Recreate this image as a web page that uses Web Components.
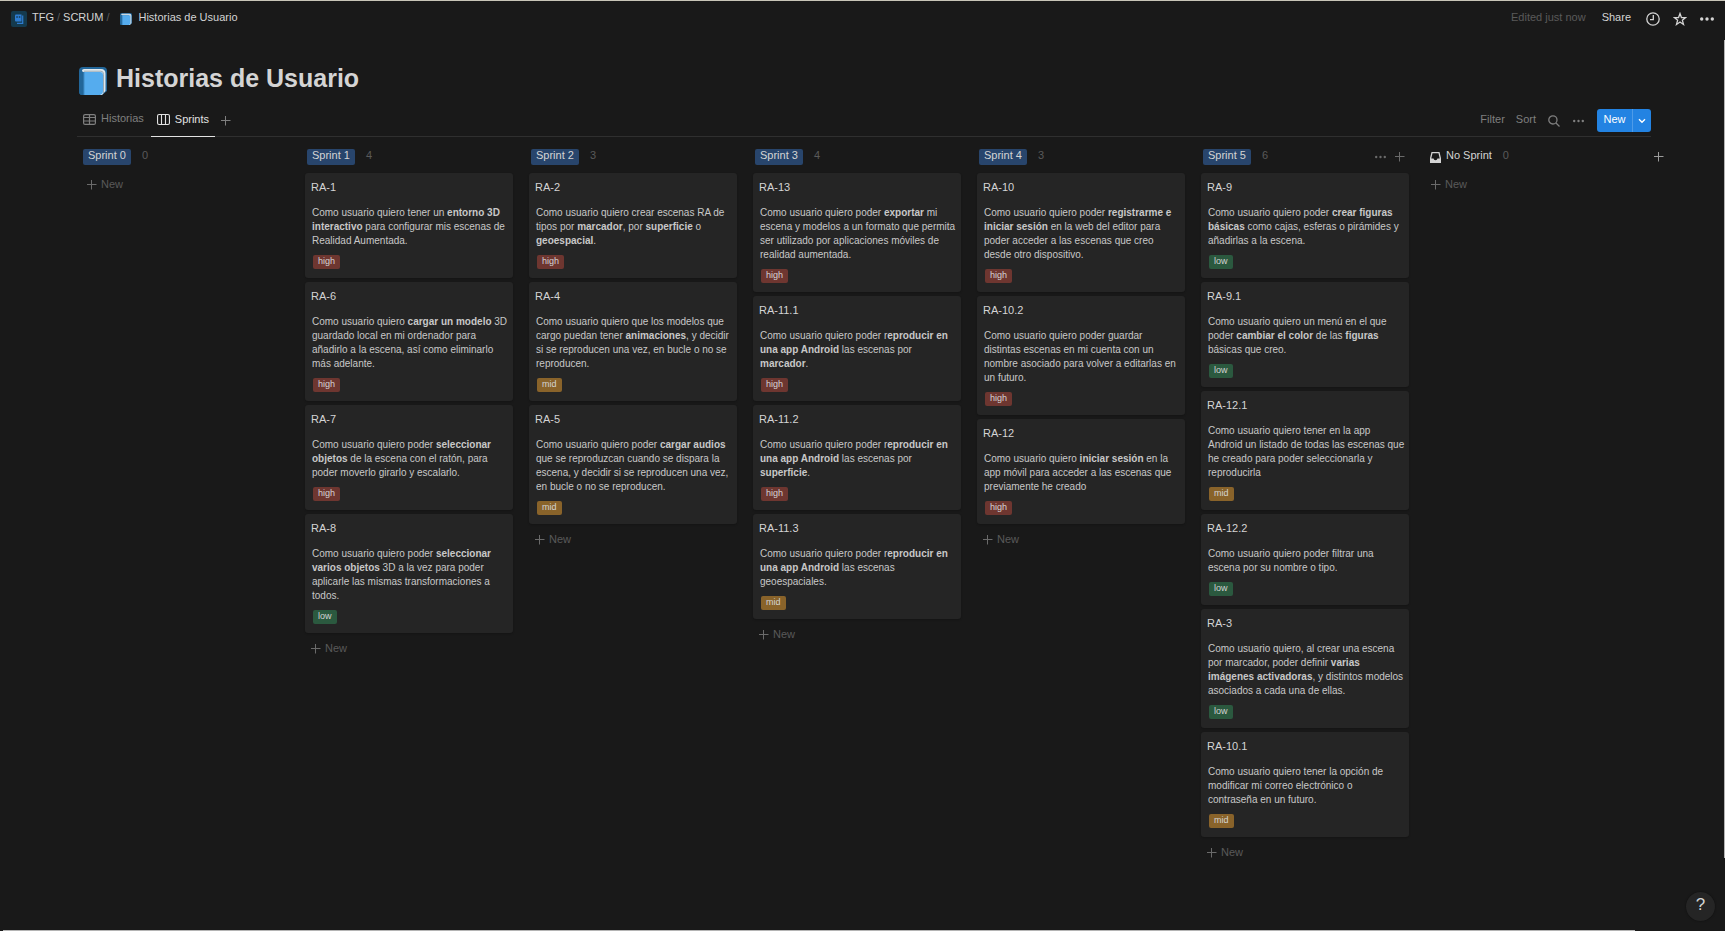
<!DOCTYPE html>
<html lang="es">
<head>
<meta charset="utf-8">
<meta name="viewport" content="width=device-width, initial-scale=1">
<title>Historias de Usuario</title>
<style>
  body {
    margin: 0;
    background: #191919;
    color: #d4d4d4;
    font: 11px/16px "Liberation Sans", Arial, sans-serif;
    --muted: #7f7f7f;
    --faint: #5a5a5a;
    --line: #2f2f2f;
  }
</style>
</head>
<body>
<app-shell>
  <app-topbar slot="top"></app-topbar>
  <page-title>Historias de Usuario</page-title>
  <view-bar></view-bar>
  <sprint-board>
    <board-column name="Sprint 0" count="0"></board-column>
    <board-column name="Sprint 1" count="4">
      <story-card code="RA-1" priority="high">Como usuario quiero tener un <b>entorno 3D<br>interactivo</b> para configurar mis escenas de<br>Realidad Aumentada.</story-card>
      <story-card code="RA-6" priority="high">Como usuario quiero <b>cargar un modelo</b> 3D<br>guardado local en mi ordenador para<br>añadirlo a la escena, así como eliminarlo<br>más adelante.</story-card>
      <story-card code="RA-7" priority="high">Como usuario quiero poder <b>seleccionar<br>objetos</b> de la escena con el ratón, para<br>poder moverlo girarlo y escalarlo.</story-card>
      <story-card code="RA-8" priority="low">Como usuario quiero poder <b>seleccionar<br>varios objetos</b> 3D a la vez para poder<br>aplicarle las mismas transformaciones a<br>todos.</story-card>
    </board-column>
    <board-column name="Sprint 2" count="3">
      <story-card code="RA-2" priority="high">Como usuario quiero crear escenas RA de<br>tipos por <b>marcador</b>, por <b>superficie</b> o<br><b>geoespacial</b>.</story-card>
      <story-card code="RA-4" priority="mid">Como usuario quiero que los modelos que<br>cargo puedan tener <b>animaciones</b>, y decidir<br>si se reproducen una vez, en bucle o no se<br>reproducen.</story-card>
      <story-card code="RA-5" priority="mid">Como usuario quiero poder <b>cargar audios</b><br>que se reproduzcan cuando se dispara la<br>escena, y decidir si se reproducen una vez,<br>en bucle o no se reproducen.</story-card>
    </board-column>
    <board-column name="Sprint 3" count="4">
      <story-card code="RA-13" priority="high">Como usuario quiero poder <b>exportar</b> mi<br>escena y modelos a un formato que permita<br>ser utilizado por aplicaciones móviles de<br>realidad aumentada.</story-card>
      <story-card code="RA-11.1" priority="high">Como usuario quiero poder r<b>eproducir en<br>una app Android</b> las escenas por<br><b>marcador</b>.</story-card>
      <story-card code="RA-11.2" priority="high">Como usuario quiero poder r<b>eproducir en<br>una app Android</b> las escenas por<br><b>superficie</b>.</story-card>
      <story-card code="RA-11.3" priority="mid">Como usuario quiero poder r<b>eproducir en<br>una app Android</b> las escenas<br>geoespaciales.</story-card>
    </board-column>
    <board-column name="Sprint 4" count="3">
      <story-card code="RA-10" priority="high">Como usuario quiero poder <b>registrarme e<br>iniciar sesión</b> en la web del editor para<br>poder acceder a las escenas que creo<br>desde otro dispositivo.</story-card>
      <story-card code="RA-10.2" priority="high">Como usuario quiero poder guardar<br>distintas escenas en mi cuenta con un<br>nombre asociado para volver a editarlas en<br>un futuro.</story-card>
      <story-card code="RA-12" priority="high">Como usuario quiero <b>iniciar sesión</b> en la<br>app móvil para acceder a las escenas que<br>previamente he creado</story-card>
    </board-column>
    <board-column name="Sprint 5" count="6" tools>
      <story-card code="RA-9" priority="low">Como usuario quiero poder <b>crear figuras<br>básicas</b> como cajas, esferas o pirámides y<br>añadirlas a la escena.</story-card>
      <story-card code="RA-9.1" priority="low">Como usuario quiero un menú en el que<br>poder <b>cambiar el color</b> de las <b>figuras</b><br>básicas que creo.</story-card>
      <story-card code="RA-12.1" priority="mid">Como usuario quiero tener en la app<br>Android un listado de todas las escenas que<br>he creado para poder seleccionarla y<br>reproducirla</story-card>
      <story-card code="RA-12.2" priority="low">Como usuario quiero poder filtrar una<br>escena por su nombre o tipo.</story-card>
      <story-card code="RA-3" priority="low">Como usuario quiero, al crear una escena<br>por marcador, poder definir <b>varias<br>imágenes activadoras</b>, y distintos modelos<br>asociados a cada una de ellas.</story-card>
      <story-card code="RA-10.1" priority="mid">Como usuario quiero tener la opción de<br>modificar mi correo electrónico o<br>contraseña en un futuro.</story-card>
    </board-column>
    <board-column name="No Sprint" count="0" plain></board-column>
    <icon-button slot="end" icon="plus" label="Add a group"></icon-button>
  </sprint-board>
  <help-button slot="help"></help-button>
</app-shell>

<script>
  const RESET = `
    *, *::before { box-sizing: border-box; }
    button, a { font: inherit; color: inherit; background: none; border: 0; padding: 0; margin: 0; text-decoration: none; cursor: pointer; }
    svg { display: block; }
  `;

  const define = (name, css, html) => {
    customElements.define(name, class extends HTMLElement {
      constructor() {
        super();
        this.attachShadow({ mode: 'open' });
      }
      connectedCallback() {
        if (this.shadowRoot.childNodes.length) return;
        const t = document.createElement('template');
        t.innerHTML = `<style>${RESET}${css}</style>${typeof html === 'function' ? html(this) : html}`;
        this.shadowRoot.append(t.content.cloneNode(true));
      }
    });
  };

  const dots = (w, r) => `<svg width="${w}" height="16" viewBox="0 0 ${w} 16" fill="currentColor"><circle cx="${r}" cy="8" r="${r}"/><circle cx="${w / 2}" cy="8" r="${r}"/><circle cx="${w - r}" cy="8" r="${r}"/></svg>`;
  const book = (s) => `<svg width="${s}" height="${s}" viewBox="0 0 28 28"><path d="M4 0h20q4 0 4 4v20l-5 4H3q-3 0-3-4V4q0-4 4-4z" fill="#226699"/><path d="M5 2h17q4.500 0 4.500 4.500V24L23 28h-2V5H5Q3 5 3 3.500T5 2z" fill="#e1e8ed"/><path d="M5 4.200h17q2.500 0 2.500 3V26" fill="none" stroke="#99aab5" stroke-width="1"/><path d="M5 5h16q3 0 3 3v16q0 4-4 4H5z" fill="#55acee"/><path d="M0 5q1 1 5 0v23H3q-3 0-3-4z" fill="#226699"/><path d="M5 5v23" stroke="#3f8cc6"/></svg>`;
  const ICONS = {
    book: book(28),
    bookSmall: book(12),
    app: `<svg width="16" height="16" viewBox="0 0 16 16"><rect width="16" height="16" rx="2" fill="#143a4e"/><path d="M5 3.500h5.500v7H5q-1 0-1-1v-5q0-1 1-1z" fill="#2e7cd1"/><path d="M11.700 4.500v7.800H6" fill="none" stroke="#2e7cd1" stroke-width="1.200"/><path d="M5.300 5.300h1.500v1.500H5.300zM7.800 5.300h1.500v1.500H7.800z" fill="#143a4e"/></svg>`,
    clock: `<svg width="14" height="14" viewBox="0 0 14 14" fill="none" stroke="currentColor" stroke-width="1.300"><circle cx="7" cy="7" r="6.200"/><path d="M7.300 3v4.600H4"/></svg>`,
    star: `<svg width="14" height="14" viewBox="0 0 14 14" fill="none" stroke="currentColor" stroke-width="1.300" stroke-linejoin="miter"><path d="M7 1.500l1.450 4 4.200.1-3.300 2.650 1.150 4.200L7 10.050l-3.500 2.400 1.150-4.200L1.350 5.600l4.200-.1z"/></svg>`,
    more: dots(14, 1.7),
    moreSmall: dots(11, 1.2),
    table: `<svg width="13" height="11" viewBox="0 0 13 11" fill="none" stroke="currentColor" stroke-width="1.200"><rect x=".6" y=".6" width="11.800" height="9.800" rx="1.500"/><path d="M.6 3.500h12M.6 7h12M6.500 .6v10"/></svg>`,
    board: `<svg width="13" height="11" viewBox="0 0 13 11" fill="none" stroke="currentColor" stroke-width="1.100"><rect x=".55" y=".55" width="11.900" height="9.900" rx="1.500"/><path d="M4.500 .6v10M8.500 .6v10"/></svg>`,
    plus: `<svg width="10" height="10" viewBox="0 0 10 10" stroke="currentColor"><path d="M4.500 0v9.500M0 4.500h9.500"/></svg>`,
    search: `<svg width="12" height="12" viewBox="0 0 12 12" fill="none" stroke="currentColor" stroke-width="1.300"><circle cx="4.900" cy="4.900" r="4.100"/><path d="M8 8l3.500 3.500"/></svg>`,
    chevron: `<svg width="8" height="6" viewBox="0 0 8 6" fill="none" stroke="currentColor" stroke-width="1.400"><path d="M1 1.200l3 3 3-3"/></svg>`,
    inbox: `<svg width="11" height="11" viewBox="0 0 11 11"><path d="M2 .7h7L10.300 6v4.300H.7V6z" fill="none" stroke="currentColor" stroke-width="1.300"/><path d="M0 6.500h3.500q.3 1.800 2 1.800t2-1.800H11V11H0z" fill="currentColor"/></svg>`
  };

  define('ui-icon', `:host { display: block; flex: none; }`, el => ICONS[el.getAttribute('name')]);

  define('icon-button', `:host { display: block; flex: none; } button { display: block; }`,
    el => `<button type="button" aria-label="${el.getAttribute('label')}"><ui-icon name="${el.getAttribute('icon')}"></ui-icon></button>`);

  define('app-shell', `
    :host { display: flex; flex-direction: column; min-height: 100vh; position: relative; box-sizing: border-box; border-top: 1px solid #c8c5b8; overflow: hidden; }
    main { flex: 1; padding: 23px 62px 32px 77px; }
    .thumb { position: absolute; background: #b4b4b4; }
    .v { right: 0; top: 39px; width: 1px; height: 88%; }
    .h { left: 3px; bottom: 0; height: 1px; width: 94.6%; }
  `, `<slot name="top"></slot><main><slot></slot></main><slot name="help"></slot><div class="thumb v"></div><div class="thumb h"></div>`);

  define('app-topbar', `
    :host { display: block; }
    header { display: flex; align-items: center; justify-content: space-between; height: 36px; padding: 0 11px; }
    nav, .actions { display: flex; align-items: center; }
    nav a, nav span, .edited, .share { padding-bottom: 4px; }
    nav span { color: var(--faint); padding-left: 3px; padding-right: 3px; }
    .home { margin: 0 5px 0 0; padding: 0; }
    .page { margin: 0 6px 0 8px; }
    .actions { gap: 13px; }
    .edited { color: var(--faint); margin-right: 3px; }
    .share { margin-right: 2px; }
  `, `<header>
    <nav aria-label="Breadcrumb"><a class="home" href="#" aria-label="Home"><ui-icon name="app"></ui-icon></a><a href="#">TFG</a><span>/</span><a href="#">SCRUM</a><span>/</span><ui-icon class="page" name="bookSmall"></ui-icon><a href="#">Historias de Usuario</a></nav>
    <div class="actions"><div class="edited">Edited just now</div><button class="share" type="button">Share</button>
      <icon-button icon="clock" label="Updates"></icon-button><icon-button icon="star" label="Favorite"></icon-button><icon-button icon="more" label="More"></icon-button></div>
  </header>`);

  define('page-title', `
    :host { display: flex; align-items: center; gap: 9px; height: 41px; padding-left: 2px; }
    h1 { margin: 0; padding-bottom: 6px; font-size: 25px; line-height: 32px; font-weight: 700; }
  `, `<ui-icon name="book"></ui-icon><h1><slot></slot></h1>`);

  define('view-bar', `
    :host { display: flex; justify-content: space-between; height: 36px; border-bottom: 1px solid var(--line); margin-right: 12px; box-sizing: border-box; }
    nav, .tools { display: flex; align-items: flex-start; }
    nav { color: var(--muted); padding-top: 3px; height: 36px; }
    nav a { display: flex; align-items: center; gap: 5px; height: 33px; padding: 0 6px 2px; margin-right: 1px; }
    nav a.on { color: #e2e2e2; border-bottom: 1px solid #e2e2e2; padding-bottom: 1px; }
    nav span { padding-bottom: 3px; }
    nav a.on span { padding-bottom: 1px; }
    nav icon-button { padding: 12px 5px; }
    .tools { align-items: center; height: 23px; margin-top: 8px; gap: 11px; color: var(--muted); }
    .tools .t { padding-bottom: 3px; }
    .tools icon-button { margin-right: 2px; }
    .tools .t + icon-button { margin-left: 1px; }
    .new { display: flex; height: 23px; border-radius: 3px; background: #2383e2; color: #fff; overflow: hidden; }
    .new button { display: flex; align-items: center; justify-content: center; }
    .new .main { width: 36px; padding-bottom: 3px; border-right: 1px solid #4e9be8; }
    .new .drop { width: 18px; }
  `, `<nav aria-label="Views"><a href="#"><ui-icon name="table"></ui-icon><span>Historias</span></a><a class="on" href="#"><ui-icon name="board"></ui-icon><span>Sprints</span></a><icon-button icon="plus" label="Add view"></icon-button></nav>
  <div class="tools"><button class="t" type="button">Filter</button><button class="t" type="button">Sort</button><icon-button icon="search" label="Search"></icon-button><icon-button icon="moreSmall" label="View options"></icon-button>
    <div class="new"><button class="main" type="button">New</button><button class="drop" type="button" aria-label="Templates"><ui-icon name="chevron"></ui-icon></button></div></div>`);

  define('sprint-board', `
    :host { display: flex; align-items: flex-start; gap: 16px; padding: 12px 0 0 4px; }
    ::slotted([slot=end]) { margin: 3px 0 0 5px; color: #9b9b9b; }
  `, `<slot></slot><slot name="end"></slot>`);

  define('board-column', `
    :host { display: flex; flex-direction: column; flex: 0 0 208px; gap: 4px; min-width: 0; }
    header { display: flex; align-items: center; height: 16px; margin-bottom: 4px; padding: 0 4px 0 2px; gap: 11px; }
    h2 { margin: 0; font: inherit; font-size: 11px; line-height: 13px; padding: 0 5px 3px; border-radius: 2px; background: #28456c; white-space: nowrap; }
    .plain { display: flex; align-items: center; gap: 5px; background: none; padding: 0; margin-left: 3px; }
    .plain span, .count { line-height: 13px; padding-bottom: 3px; }
    .count { color: var(--faint); flex: 1; }
    .tools { display: flex; align-items: center; gap: 9px; color: #6a6a6a; }
    .add { display: flex; align-items: center; gap: 4px; height: 24px; padding: 0 6px; color: var(--faint); align-self: flex-start; }
    .add span { padding-bottom: 2px; }
    .add ui-icon { color: #6a6a6a; }
  `, el => `<header>${el.hasAttribute('plain')
      ? `<h2 class="plain"><ui-icon name="inbox"></ui-icon><span>${el.getAttribute('name')}</span></h2>`
      : `<h2>${el.getAttribute('name')}</h2>`}
    <div class="count">${el.getAttribute('count')}</div>
    ${el.hasAttribute('tools') ? '<div class="tools"><icon-button icon="moreSmall" label="Group options"></icon-button><icon-button icon="plus" label="Add card"></icon-button></div>' : ''}
  </header><slot></slot><button class="add" type="button"><ui-icon name="plus"></ui-icon><span>New</span></button>`);

  define('story-card', `
    :host { display: block; background: #252525; border-radius: 3px; padding: 0 3px 9px 6px; box-shadow: 0 1px 2px #0003; }
    h3 { margin: 0 0 5px; font: inherit; line-height: 28px; }
    p { margin: 0 0 7px 1px; font-size: 10px; line-height: 14px; white-space: nowrap; color: #c8c8c8; }
    priority-tag { margin-left: 2px; }
  `, el => `<h3>${el.getAttribute('code')}</h3><p><slot></slot></p><priority-tag level="${el.getAttribute('priority')}"></priority-tag>`);

  define('priority-tag', `
    :host { display: block; width: max-content; height: 14px; border-radius: 2px; padding: 0 5px 2px; box-sizing: border-box; font-size: 9px; line-height: 12px; }
    :host([level=high]) { background: #6e3630; }
    :host([level=mid]) { background: #89632a; }
    :host([level=low]) { background: #2b593f; }
  `, el => `<span>${el.getAttribute('level')}</span>`);

  define('help-button', `
    :host { position: absolute; right: 10px; bottom: 10px; }
    button { width: 29px; height: 29px; border-radius: 50%; background: #252525; font-size: 17px; line-height: 24px; padding-bottom: 4px; box-shadow: 0 0 2px #0008; }
  `, `<button type="button" aria-label="Help">?</button>`);
</script>
</body>
</html>
